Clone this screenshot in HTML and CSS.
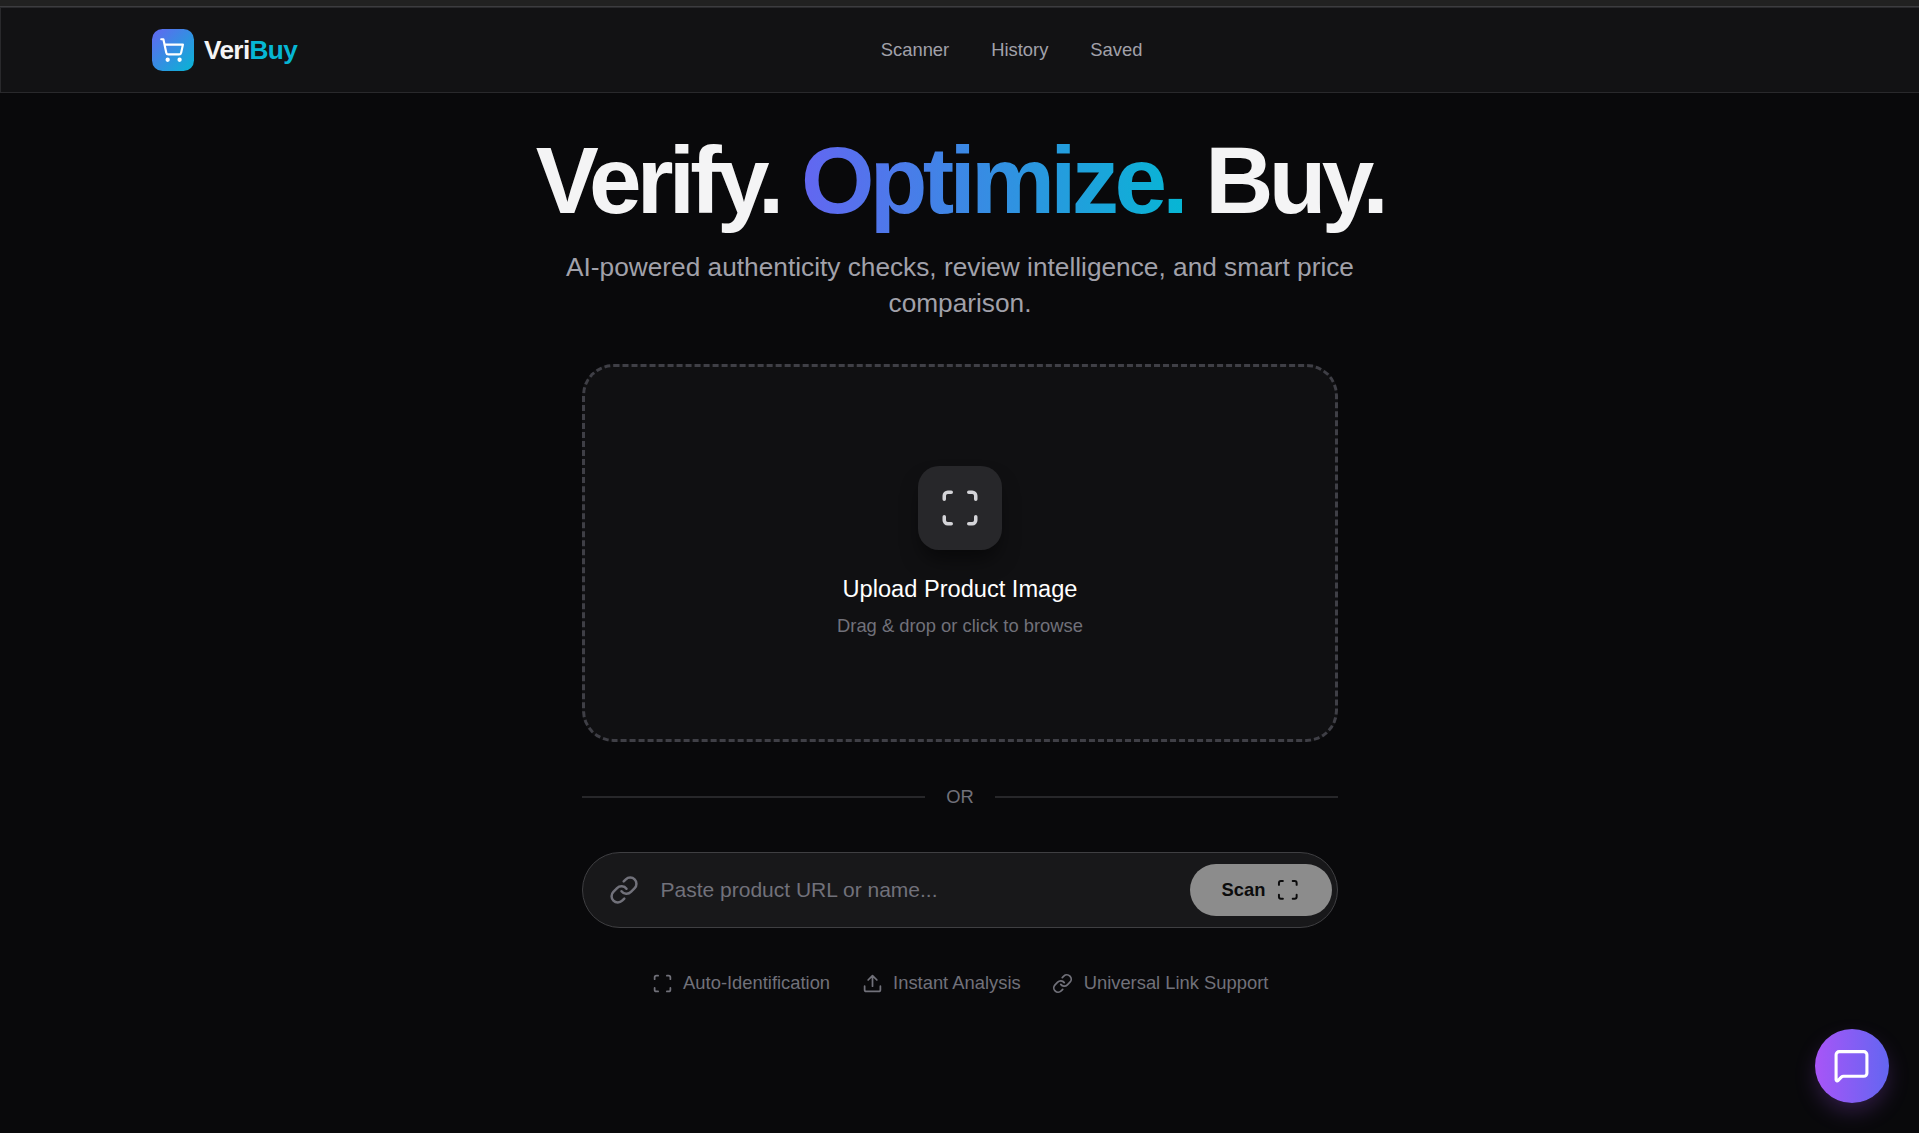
FILE: index.html
```html
<!DOCTYPE html>
<html lang="en">

<head>
    <meta charset="UTF-8">
    <meta name="viewport" content="width=device-width, initial-scale=1.0">
    <title>VeriBuy</title>
    <link rel="stylesheet" href="styles.css">
</head>

<body>
    <div class="top-strip"></div>
    <header class="header">
        <div class="header-inner">
            <a class="logo" href="#">
                <span class="logo-icon">
                    <svg class="icon" viewBox="0 0 24 24">
                        <circle cx="8" cy="21" r="1" />
                        <circle cx="19" cy="21" r="1" />
                        <path d="M2.05 2.05h2l2.66 12.42a2 2 0 0 0 2 1.58h9.78a2 2 0 0 0 1.95-1.57l1.65-7.43H5.12" />
                    </svg>
                </span>
                <span class="logo-text">Veri<span class="logo-accent">Buy</span></span>
            </a>
            <nav class="nav">
                <a href="#">Scanner</a>
                <a href="#">History</a>
                <a href="#">Saved</a>
            </nav>
            <div class="header-end"></div>
        </div>
    </header>

    <main class="hero">
        <h1>Verify. <span class="gradient-text">Optimize.</span> Buy.</h1>
        <p class="subtitle">AI-powered authenticity checks, review intelligence, and smart price comparison.</p>

        <div class="scanner">
            <div class="dropzone">
                <div class="dropzone-icon">
                    <svg class="icon" viewBox="0 0 24 24">
                        <path d="M3 7V5a2 2 0 0 1 2-2h2M17 3h2a2 2 0 0 1 2 2v2M21 17v2a2 2 0 0 1-2 2h-2M7 21H5a2 2 0 0 1-2-2v-2" />
                    </svg>
                </div>
                <h3>Upload Product Image</h3>
                <p>Drag &amp; drop or click to browse</p>
            </div>

            <div class="divider"><span>OR</span></div>

            <form class="search">
                <svg class="icon search-icon" viewBox="0 0 24 24">
                    <path d="M10 13a5 5 0 0 0 7.54.54l3-3a5 5 0 0 0-7.07-7.07l-1.72 1.71" />
                    <path d="M14 11a5 5 0 0 0-7.54-.54l-3 3a5 5 0 0 0 7.07 7.07l1.71-1.71" />
                </svg>
                <input type="text" placeholder="Paste product URL or name...">
                <button type="button" class="scan-btn">
                    Scan
                    <svg class="icon" viewBox="0 0 24 24">
                        <path d="M3 7V5a2 2 0 0 1 2-2h2M17 3h2a2 2 0 0 1 2 2v2M21 17v2a2 2 0 0 1-2 2h-2M7 21H5a2 2 0 0 1-2-2v-2" />
                    </svg>
                </button>
            </form>

            <ul class="features">
                <li>
                    <svg class="icon" viewBox="0 0 24 24">
                        <path d="M3 7V5a2 2 0 0 1 2-2h2M17 3h2a2 2 0 0 1 2 2v2M21 17v2a2 2 0 0 1-2 2h-2M7 21H5a2 2 0 0 1-2-2v-2" />
                    </svg>
                    Auto-Identification
                </li>
                <li>
                    <svg class="icon" viewBox="0 0 24 24">
                        <path d="M12 3v12M17 8l-5-5-5 5" />
                        <path d="M21 15v4a2 2 0 0 1-2 2H5a2 2 0 0 1-2-2v-4" />
                    </svg>
                    Instant Analysis
                </li>
                <li>
                    <svg class="icon" viewBox="0 0 24 24">
                        <path d="M10 13a5 5 0 0 0 7.54.54l3-3a5 5 0 0 0-7.07-7.07l-1.72 1.71" />
                        <path d="M14 11a5 5 0 0 0-7.54-.54l-3 3a5 5 0 0 0 7.07 7.07l1.71-1.71" />
                    </svg>
                    Universal Link Support
                </li>
            </ul>
        </div>
    </main>

    <button type="button" class="chat-btn" aria-label="Chat">
        <svg class="icon" viewBox="0 0 24 24">
            <path d="M22 17a2 2 0 0 1-2 2H6.828a2 2 0 0 0-1.414.586l-2.202 2.202A.71.71 0 0 1 2 21.286V5a2 2 0 0 1 2-2h16a2 2 0 0 1 2 2z" />
        </svg>
    </button>
</body>

</html>
```

FILE: styles.css
```css
* {
    box-sizing: border-box;
    margin: 0;
    padding: 0;
}

body {
    min-height: 100vh;
    background-color: #09090b;
    color: #f4f4f5;
    font-family: "Liberation Sans", Arial, sans-serif;
    font-size: 21px;
    overflow: hidden;
}

a {
    color: inherit;
    text-decoration: none;
}

.icon {
    flex-shrink: 0;
    fill: none;
    stroke: currentColor;
    stroke-width: 2;
    stroke-linecap: round;
    stroke-linejoin: round;
}

/* header */
.top-strip {
    height: 7px;
    background-color: #212121;
    border-bottom: 1px solid #3c3c3f;
}

.header {
    height: 86px;
    background-color: #121214;
    border: 1px solid #29292c;
    border-right: none;
}

.header-inner {
    display: flex;
    align-items: center;
    justify-content: space-between;
    width: 1680px;
    height: 100%;
    margin: 0 auto;
    padding: 0 32px;
}

.logo {
    display: flex;
    align-items: center;
    gap: 10px;
}

.logo-icon {
    display: flex;
    align-items: center;
    justify-content: center;
    width: 42px;
    height: 42px;
    padding-right: 2px;
    border-radius: 10.5px;
    background: linear-gradient(135deg, #6366f1, #06b6d4);
    color: #fff;
}

.logo-icon .icon {
    width: 26px;
    height: 26px;
}

.logo-text {
    font-size: 26.25px;
    font-weight: bold;
    letter-spacing: -0.025em;
}

.logo-accent {
    color: #06b6d4;
}

.nav {
    display: flex;
    gap: 42px;
    color: #a1a1aa;
    font-size: 18.375px;
}

.header-end {
    width: 42px;
}

/* hero */
.hero {
    display: flex;
    flex-direction: column;
    align-items: center;
    padding: 40px 0 0 1px;
    text-align: center;
}

h1 {
    margin-bottom: 21px;
    font-size: 94.5px;
    line-height: 1;
    letter-spacing: -0.05em;
}

.gradient-text {
    background: linear-gradient(to right, #6366f1, #06b6d4);
    -webkit-background-clip: text;
    background-clip: text;
    color: transparent;
}

.subtitle {
    width: 882px;
    margin-bottom: 43.5px;
    color: #a1a1aa;
    font-size: 26.25px;
    line-height: 36px;
}

.scanner {
    width: 756px;
}

.dropzone {
    display: flex;
    flex-direction: column;
    align-items: center;
    justify-content: center;
    height: 378px;
    padding-bottom: 2px;
    border: 3px dashed #3f3f46;
    border-radius: 31.5px;
    background-color: #101012;
}

.dropzone-icon {
    display: flex;
    align-items: center;
    justify-content: center;
    width: 84px;
    height: 84px;
    margin-bottom: 21px;
    border-radius: 21px;
    background-color: #27272a;
    color: #d4d4d8;
    box-shadow: 0 13px 20px -4px rgba(0, 0, 0, 0.5);
}

.dropzone-icon .icon {
    width: 42px;
    height: 42px;
}

.dropzone h3 {
    margin-bottom: 5px;
    color: #fff;
    font-size: 23.625px;
    font-weight: normal;
    line-height: 37px;
}

.dropzone p {
    color: #71717a;
    font-size: 18.375px;
    line-height: 26px;
}

.divider {
    display: flex;
    align-items: center;
    gap: 21px;
    margin: 42px 0;
    color: #71717a;
    font-size: 18.375px;
    line-height: 26px;
}

.divider::before,
.divider::after {
    content: "";
    flex: 1;
    height: 2px;
    background-color: #27272a;
}

/* url input */
.search {
    display: flex;
    align-items: center;
    height: 76px;
    padding: 0 5px 0 26px;
    border: 1px solid #3f3f42;
    border-radius: 38px;
    background-color: #18181a;
}

.search-icon {
    width: 30px;
    height: 30px;
    color: #71717a;
}

.search input {
    flex: 1;
    min-width: 0;
    margin-left: 21.5px;
    border: none;
    outline: none;
    background: none;
    color: #fff;
    font-family: inherit;
    font-size: 21px;
}

.search input::placeholder {
    color: #71717a;
}

.scan-btn {
    display: flex;
    align-items: center;
    gap: 11px;
    height: 52px;
    padding: 0 32px;
    border: none;
    border-radius: 26px;
    background-color: #8c8c8c;
    color: #0c0c0d;
    font-family: inherit;
    font-size: 18.375px;
    font-weight: bold;
}

.scan-btn .icon {
    width: 23.6px;
    height: 23.6px;
}

.features {
    display: flex;
    justify-content: center;
    gap: 31.5px;
    margin-top: 42px;
    color: #71717a;
    font-size: 18.375px;
    line-height: 26px;
    list-style: none;
}

.features li {
    display: flex;
    align-items: center;
    gap: 10.5px;
}

.features .icon {
    width: 21px;
    height: 21px;
}

/* floating chat button */
.chat-btn {
    position: fixed;
    right: 30px;
    bottom: 30px;
    display: flex;
    align-items: center;
    justify-content: center;
    width: 74px;
    height: 74px;
    padding: 0 1px 1px 0;
    border: none;
    border-radius: 50%;
    background: linear-gradient(to right, #a855f7, #6366f1);
    color: #fff;
    box-shadow: 0 10px 24px -4px rgba(168, 85, 247, 0.3);
}

.chat-btn .icon {
    width: 37px;
    height: 37px;
}
```
